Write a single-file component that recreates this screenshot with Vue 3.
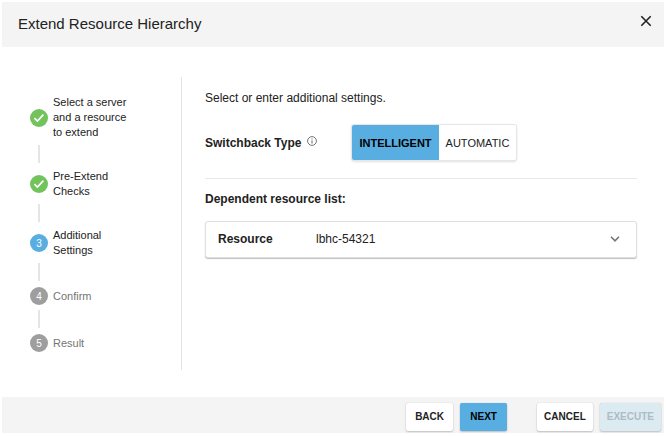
<script setup>
import { ref } from 'vue'

const steps = [
  { label: 'Select a server and a resource to extend', state: 'done' },
  { label: 'Pre-Extend Checks', state: 'done' },
  { label: 'Additional Settings', state: 'active' },
  { label: 'Confirm', state: 'pending' },
  { label: 'Result', state: 'pending' },
]

const options = ['Intelligent', 'Automatic']
const switchback = ref('Intelligent')
</script>

<template>
  <section class="dialog" aria-labelledby="dialog-title">
    <header class="head">
      <h1 id="dialog-title">Extend Resource Hierarchy</h1>
      <button class="close" type="button" aria-label="Close">
        <svg viewBox="0 0 12 12" width="12" height="12" aria-hidden="true">
          <path d="M1.3 1.3 10.7 10.7M10.7 1.3 1.3 10.7" fill="none" stroke="#222" stroke-width="1.6" />
        </svg>
      </button>
    </header>

    <div class="body">
      <nav class="side" aria-label="Progress">
        <ol class="steps">
          <li v-for="(step, i) in steps" :key="step.label" :class="['step', step.state]">
            <span class="badge">
              <svg v-if="step.state === 'done'" viewBox="0 0 18 18" width="18" height="18" aria-hidden="true">
                <path d="M4.4 9.2 7.4 12.1 13.4 5.6" fill="none" stroke="#fff" stroke-width="1.6" />
              </svg>
              <template v-else>{{ i + 1 }}</template>
            </span>
            <span class="label">{{ step.label }}</span>
          </li>
        </ol>
      </nav>

      <main class="main">
        <p class="intro">Select or enter additional settings.</p>
        <div class="setting">
          <span id="switchback-label" class="name">Switchback Type</span>
          <svg class="info" viewBox="0 0 10 10" width="10" height="10" aria-hidden="true">
            <circle cx="5" cy="5" r="4.4" fill="none" stroke="#666" stroke-width="0.9" />
            <path d="M5 4.4V7.5M5 2.5V3.5" stroke="#666" stroke-width="1" />
          </svg>
          <div class="toggle" role="group" aria-labelledby="switchback-label">
            <button
              v-for="option in options"
              :key="option"
              type="button"
              :class="{ on: switchback === option }"
              :aria-pressed="switchback === option"
              @click="switchback = option"
            >{{ option }}</button>
          </div>
        </div>

        <h2>Dependent resource list:</h2>
        <button class="resource" type="button" aria-expanded="false">
          <span class="key">Resource</span>
          <span class="value">lbhc-54321</span>
          <svg viewBox="0 0 10 6" width="10" height="6" aria-hidden="true">
            <path d="M1 .8 5 4.8 9 .8" fill="none" stroke="#757575" stroke-width="1.6" />
          </svg>
        </button>
      </main>
    </div>

    <footer class="foot">
      <div class="pair">
        <button class="btn" type="button">Back</button>
        <button class="btn primary" type="button">Next</button>
      </div>
      <div class="pair">
        <button class="btn" type="button">Cancel</button>
        <button class="btn" type="button" disabled>Execute</button>
      </div>
    </footer>
  </section>
</template>

<style>
body {
  background: #fff;
}
</style>

<style scoped>
.dialog {
  display: flex;
  flex-direction: column;
  box-sizing: border-box;
  min-height: 100vh;
  padding: 2px 2px 3px;
  font-family: "Liberation Sans", Arial, sans-serif;
  font-size: 12px;
  line-height: 16px;
  color: #222;
}
button {
  margin: 0;
  font: inherit;
  color: inherit;
  cursor: pointer;
}
.head {
  display: flex;
  justify-content: space-between;
  align-items: flex-start;
  padding: 12px 12px 13px 16px;
  background: #f4f4f4;
}
h1 {
  margin: 0;
  font-size: 15px;
  line-height: 20px;
  font-weight: 400;
}
.close {
  display: flex;
  padding: 1px 0;
  border: 0;
  background: none;
}
.body {
  flex: 1;
  display: flex;
  padding: 30px 27px 27px 28px;
}
.side {
  flex: 0 0 151px;
  border-right: 1px solid #e3e3e3;
}
.steps {
  display: flex;
  flex-direction: column;
  gap: 29px;
  margin: 0;
  padding: 18px 50px 0 0;
  list-style: none;
}
.step {
  position: relative;
  display: flex;
  align-items: center;
  gap: 5px;
  font-size: 11px;
  line-height: 15px;
}
.step:not(:last-child)::after {
  content: "";
  position: absolute;
  left: 8px;
  top: calc(100% + 5px);
  width: 2px;
  height: 18px;
  background: #e5e5e5;
}
.badge {
  flex: none;
  display: flex;
  align-items: center;
  justify-content: center;
  width: 18px;
  height: 18px;
  border-radius: 50%;
  background: #9e9e9e;
  color: #fff;
  font-size: 10px;
}
.done .badge {
  background: #72c35b;
}
.active .badge {
  background: #58aee0;
}
.pending .label {
  color: #757575;
}
.main {
  flex: 1;
  min-width: 0;
  padding: 13px 0 0 23px;
}
.intro {
  margin: 0 0 19px;
}
.setting {
  display: flex;
  align-items: center;
  padding-bottom: 18px;
  border-bottom: 1px solid #e8e8e8;
}
.name {
  font-weight: 700;
}
.info {
  margin: 0 35px 4px 6px;
}
.toggle {
  display: flex;
  border-radius: 2px;
  box-shadow: 0 0 0 1px #e6e6e6, 0 1px 3px rgba(0, 0, 0, 0.25);
}
.toggle button {
  padding: 0 7px;
  height: 35px;
  border: 0;
  border-radius: 0 2px 2px 0;
  background: #fff;
  font-size: 11px;
  text-transform: uppercase;
}
.toggle .on {
  border-radius: 2px 0 0 2px;
  background: #58aee0;
  color: #000;
  font-weight: 700;
}
h2 {
  margin: 12px 0 14px;
  font-size: 12px;
  line-height: 16px;
  font-weight: 700;
}
.resource {
  display: flex;
  align-items: center;
  width: 100%;
  padding: 9px 16px 10px 12px;
  border: 1px solid #e0e0e0;
  border-radius: 3px;
  background: #fff;
  box-shadow: 0 1px 1px rgba(0, 0, 0, 0.25);
  text-align: left;
}
.key {
  flex: 0 0 98px;
  font-weight: 700;
}
.value {
  flex: 1;
}
.foot {
  display: flex;
  justify-content: flex-end;
  gap: 30px;
  padding: 6px 3px 2px;
  background: #f4f4f4;
}
.pair {
  display: flex;
  gap: 7px;
}
.btn {
  min-width: 47px;
  height: 28px;
  padding: 0 7px;
  border: 0;
  border-radius: 2px;
  background: #fff;
  box-shadow: 0 0 1px rgba(0, 0, 0, 0.2), 0 1px 2px rgba(0, 0, 0, 0.2);
  font-size: 10px;
  font-weight: 700;
  text-transform: uppercase;
}
.primary {
  background: #58aee0;
  color: #000;
}
.btn:disabled {
  background: #dceaf1;
  color: #adbcc4;
  cursor: default;
}
</style>
